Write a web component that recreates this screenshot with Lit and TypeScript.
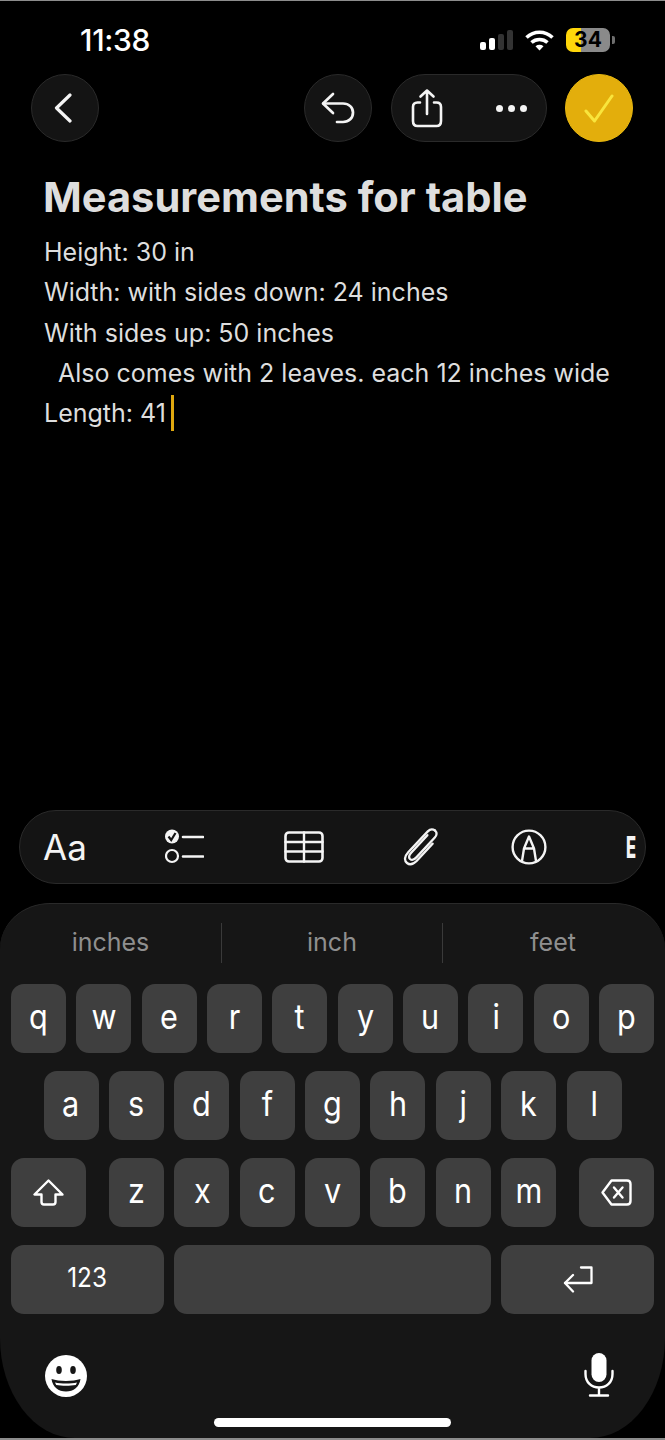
import {LitElement, html, css, svg} from 'lit';
import {customElement} from 'lit/decorators.js';

const ROWS = ['qwertyuiop', 'asdfghjkl', 'zxcvbnm'];
const NOTE_LINES = [
  'Height: 30 in',
  'Width: with sides down: 24 inches',
  'With sides up: 50 inches',
  '\u00a0\u00a0Also comes with 2 leaves. each 12 inches wide',
];

const icon = (w: number, h: number, body: unknown) => html`
  <svg width=${w} height=${h} viewBox="0 0 ${w} ${h}" fill="none" stroke="currentColor"
    stroke-linecap="round" stroke-linejoin="round">${body}</svg>
`;

const back = icon(18, 30, svg`<path d="M16 2 L2.5 15 L16 28" stroke-width="3.2"/>`);
const undo = icon(34, 32, svg`
  <path d="M12 2 L2 11.5 L12 21" stroke-width="2.7"/>
  <path d="M2.5 11.5 H22 C28 11.5 32 15.5 32 20.5 C32 26 28 30 22 30 H16" stroke-width="2.7"/>
`);
const share = icon(32, 40, svg`
  <path d="M9 14.5 H6.5 C3.5 14.5 2 16 2 19 V33 C2 36.5 3.5 38 6.5 38 H25.5 C28.5 38 30 36.5 30 33 V19 C30 16 28.5 14.5 25.5 14.5 H23" stroke-width="2.6"/>
  <path d="M16 26 V2.5 M9.5 8.5 L16 2.5 L22.5 8.5" stroke-width="2.6"/>
`);
const check = icon(30, 29, svg`<path d="M2 17 L10.5 27 L28 2" stroke-width="3"/>`);
const checklist = html`
  <svg width="39" height="36" viewBox="0 0 39 36" fill="none">
    <circle cx="7" cy="7.5" r="7" fill="currentColor"/>
    <path d="M3.5 7.5 L6.2 11 L10.5 4" stroke="#141414" stroke-width="2.2" fill="none"/>
    <circle cx="7" cy="27" r="6" stroke="currentColor" stroke-width="2.2"/>
    <path d="M18 8 H38 M18 27.5 H38" stroke="currentColor" stroke-width="2.6" stroke-linecap="round"/>
  </svg>
`;
const table = icon(40, 32, svg`
  <rect x="1.5" y="1.5" width="37" height="29" rx="3.5" stroke-width="2.6"/>
  <path d="M1.5 11 H38.5 M1.5 20.5 H38.5 M20 1.5 V30.5" stroke-width="2.4"/>
`);
const clip = icon(35, 38, svg`
  <path d="M32 2.5 C29.5 0.8 26.8 1.4 24.8 3.4 L5.2 24.2 C1.2 28.6 1.2 32.8 4 35 C6.8 37.2 10.4 36.2 13.6 33 L29.6 15.6" stroke-width="2.3"/>
  <path d="M32 2.5 C34.4 4.6 33.8 7.4 31.8 9.6 L13.4 29.4 C11 32 8.4 32.2 7 31 C5.6 29.6 6 27.2 8.2 24.8 L24.4 7.2" stroke-width="2.3"/>
`);
const markup = icon(36, 36, svg`
  <circle cx="18" cy="18" r="16.4" stroke-width="2.4"/>
  <path d="M11 32 L13 19.5 L18 7.5 L23 19.5 L25 32 M13 19.5 H23" stroke-width="2.4"/>
`);
const shift = icon(31, 27, svg`<path d="M15.5 1.5 L1.5 15.5 H8.5 V23 C8.5 24.8 9.5 25.5 11 25.5 H20 C21.5 25.5 22.5 24.8 22.5 23 V15.5 H29.5 Z" stroke-width="2.4"/>`);
const del = icon(31, 27, svg`
  <path d="M10.5 1.5 H26 C28.5 1.5 29.5 2.7 29.5 5 V22 C29.5 24.3 28.5 25.5 26 25.5 H10.5 L1.5 13.5 Z" stroke-width="2.4"/>
  <path d="M13 8.5 L21.5 18.5 M21.5 8.5 L13 18.5" stroke-width="2.4"/>
`);
const ret = icon(30, 27, svg`
  <path d="M18 1.5 H28.5 V17 H2" stroke-width="2.3"/>
  <path d="M10 9 L2 17 L10 25.5" stroke-width="2.3"/>
`);
const smiley = html`
  <svg width="42" height="42" viewBox="0 0 42 42">
    <circle cx="21" cy="21" r="21" fill="#fff"/>
    <ellipse cx="14" cy="15" rx="2.8" ry="4" fill="#161616"/>
    <ellipse cx="28" cy="15" rx="2.8" ry="4" fill="#161616"/>
    <path d="M6.5 24 C14 26.5 28 26.5 35.5 24 C34.5 32 28.5 36.5 21 36.5 C13.5 36.5 7.5 32 6.5 24 Z" fill="#161616"/>
    <path d="M10 27.5 C16 28.8 26 28.8 32 27.5 L30.8 30 C25 31 17 31 11.2 30 Z" fill="#fff"/>
  </svg>
`;
const mic = html`
  <svg width="30" height="44" viewBox="0 0 30 44" fill="none">
    <rect x="7.5" y="0" width="15" height="29" rx="7.5" fill="#fff"/>
    <path d="M1.5 18 V21 C1.5 29.5 7.5 34.5 15 34.5 C22.5 34.5 28.5 29.5 28.5 21 V18 M15 34.5 V42 M6 42.5 H24"
      stroke="#fff" stroke-width="2.4" stroke-linecap="round"/>
  </svg>
`;

@customElement('app-root')
export class AppRoot extends LitElement {
  static override styles = css`
    :host {
      display: flex;
      flex-direction: column;
      width: 665px;
      height: 1440px;
      overflow: hidden;
      box-sizing: border-box;
      background: #000;
      color: #fff;
      border-top: 1px solid #8c8c8c;
      border-bottom: 2px solid #8c8c8c;
      font-family: Inter, 'Liberation Sans', sans-serif;
    }
    .status {
      display: flex;
      align-items: center;
      height: 73px;
      padding: 5px 50px 0 80px;
      box-sizing: border-box;
    }
    .time {
      font-size: 30px;
      font-weight: 500;
      letter-spacing: -0.3px;
      flex: 1;
    }
    .bars {
      display: flex;
      align-items: flex-end;
      gap: 3px;
      height: 20px;
      margin-right: 12px;
    }
    .bars i {
      width: 6px;
      border-radius: 2px;
      background: #fff;
    }
    .bars i.off {
      background: #333;
    }
    .wifi {
      margin-right: 12px;
    }
    .battery {
      position: relative;
      width: 44px;
      height: 24px;
      border-radius: 7px;
      overflow: hidden;
      background: linear-gradient(90deg, #ffd60a 0 15px, #8a8a8a 15px);
      color: #000;
      font-size: 21px;
      font-weight: 700;
      line-height: 24px;
      text-align: center;
    }
    .nub {
      width: 3px;
      height: 8px;
      margin-left: 2px;
      border-radius: 0 2px 2px 0;
      background: #6e6e6e;
    }
    .nav {
      display: flex;
      align-items: center;
      height: 68px;
      padding: 0 32px 0 31px;
    }
    .round,
    .pill {
      display: flex;
      align-items: center;
      justify-content: center;
      box-sizing: border-box;
      height: 68px;
      border: 1px solid #2a2a2a;
      border-radius: 34px;
      background: #141414;
      color: #f4f4f4;
    }
    .round {
      width: 68px;
    }
    .back svg {
      margin-right: 4px;
    }
    .undo {
      margin-left: auto;
    }
    .pill {
      justify-content: space-between;
      width: 156px;
      margin: 0 18px 0 19px;
      padding: 0 19px 0 19px;
    }
    .dots {
      display: flex;
      gap: 5px;
    }
    .dots i {
      width: 7px;
      height: 7px;
      border-radius: 50%;
      background: #f4f4f4;
    }
    .done {
      border-color: #e8b80f;
      background: #e3ae0c;
      color: #f9e53c;
    }
    .note {
      flex: 1;
      padding: 30px 20px 0 44px;
      color: #dedede;
    }
    h1 {
      margin: 0 0 10px -1px;
      font-size: 41.6px;
      line-height: 50px;
      font-weight: 700;
      white-space: nowrap;
    }
    .line {
      display: flex;
      align-items: center;
      height: 40.3px;
      font-size: 25px;
      white-space: pre;
    }
    .caret {
      width: 3px;
      height: 36px;
      margin-left: 5px;
      background: #e0a80f;
    }
    .tools {
      display: flex;
      align-items: center;
      gap: 80px;
      box-sizing: border-box;
      height: 74px;
      margin: 0 19px 19px;
      padding: 0 0 0 23px;
      overflow: hidden;
      border: 1px solid #2a2a2a;
      border-radius: 37px;
      background: #141414;
      color: #f4f4f4;
    }
    .tools > * {
      flex: none;
    }
    .tools svg {
      display: block;
    }
    .clip {
      margin-left: -1px;
    }
    .markup {
      margin-left: -7px;
    }
    .aa {
      font-size: 35px;
      font-weight: 400;
      width: 42px;
    }
    .cut {
      margin-left: -1px;
      width: 10px;
      font-size: 30px;
      font-weight: 800;
      line-height: 1;
    }
    .cut span {
      display: block;
      transform: scaleX(0.55);
      transform-origin: left center;
    }
    .board {
      display: flex;
      flex-direction: column;
      height: 535px;
      box-sizing: border-box;
      border-top: 1px solid #2a2a2a;
      border-radius: 50px 50px 75px 75px / 46px 46px 100px 100px;
      background: #161616;
    }
    .suggest {
      display: grid;
      grid-template-columns: repeat(3, 221px);
      height: 40px;
      margin: 19px 0 21px;
      color: #8f8f8f;
      font-size: 25px;
      text-align: center;
      line-height: 38px;
    }
    .suggest span + span {
      border-left: 1px solid #3a3a3a;
    }
    .rows {
      display: flex;
      flex-direction: column;
      gap: 18px;
      padding: 0 11px;
    }
    .row {
      display: flex;
      justify-content: space-between;
    }
    .row.home {
      padding: 0 32.5px;
    }
    .letters {
      display: flex;
      justify-content: space-between;
      width: 447px;
    }
    .key {
      display: flex;
      align-items: center;
      justify-content: center;
      width: 55px;
      height: 69px;
      border-radius: 13px;
      background: #3f3f3f;
      color: #fff;
      font-size: 34px;
      line-height: 1;
    }
    .key span {
      position: relative;
      top: -2px;
      display: block;
      transform: scaleX(0.9);
    }
    .wide {
      width: 75px;
    }
    .num {
      width: 153px;
      font-size: 27px;
    }
    .space {
      width: 317px;
    }
    .foot {
      display: flex;
      justify-content: space-between;
      align-items: flex-end;
      padding: 0 51px 0 45px;
      margin-top: 39px;
    }
    .bar {
      width: 237px;
      height: 9px;
      margin: 21px auto 0;
      border-radius: 5px;
      background: #fff;
    }
  `;

  private keyRow(chars: string) {
    return [...chars].map((c) => html`<div class="key"><span>${c}</span></div>`);
  }

  override render() {
    return html`
      <div class="status">
        <div class="time">11:38</div>
        <div class="bars">
          <i style="height:8px"></i><i style="height:12px"></i>
          <i class="off" style="height:16px"></i><i class="off" style="height:20px"></i>
        </div>
        <svg class="wifi" width="29" height="21" viewBox="0 0 29 21" fill="none" stroke="#fff" stroke-width="3.6">
          <path d="M1.5 7.5 C9 0.5 20 0.5 27.5 7.5"/>
          <path d="M6.5 12.5 C11 8.5 18 8.5 22.5 12.5"/>
          <path d="M14.5 20.5 L10.5 16.2 C13 14.4 16 14.4 18.5 16.2 Z" fill="#fff" stroke="none"/>
        </svg>
        <div class="battery">34</div>
        <div class="nub"></div>
      </div>

      <div class="nav">
        <div class="round back">${back}</div>
        <div class="round undo">${undo}</div>
        <div class="pill">${share}<div class="dots"><i></i><i></i><i></i></div></div>
        <div class="round done">${check}</div>
      </div>

      <div class="note">
        <h1>Measurements for table</h1>
        ${NOTE_LINES.map((l) => html`<div class="line">${l}</div>`)}
        <div class="line">Length: 41<span class="caret"></span></div>
      </div>

      <div class="tools">
        <div class="aa">Aa</div>
        ${checklist} ${table}
        <div class="clip">${clip}</div>
        <div class="markup">${markup}</div>
        <div class="cut"><span>E</span></div>
      </div>

      <div class="board">
        <div class="suggest"><span>inches</span><span>inch</span><span>feet</span></div>
        <div class="rows">
          <div class="row">${this.keyRow(ROWS[0])}</div>
          <div class="row home">${this.keyRow(ROWS[1])}</div>
          <div class="row">
            <div class="key wide">${shift}</div>
            <div class="letters">${this.keyRow(ROWS[2])}</div>
            <div class="key wide">${del}</div>
          </div>
          <div class="row">
            <div class="key num"><span>123</span></div>
            <div class="key space"></div>
            <div class="key num">${ret}</div>
          </div>
        </div>
        <div class="foot">${smiley}${mic}</div>
        <div class="bar"></div>
      </div>
    `;
  }
}
